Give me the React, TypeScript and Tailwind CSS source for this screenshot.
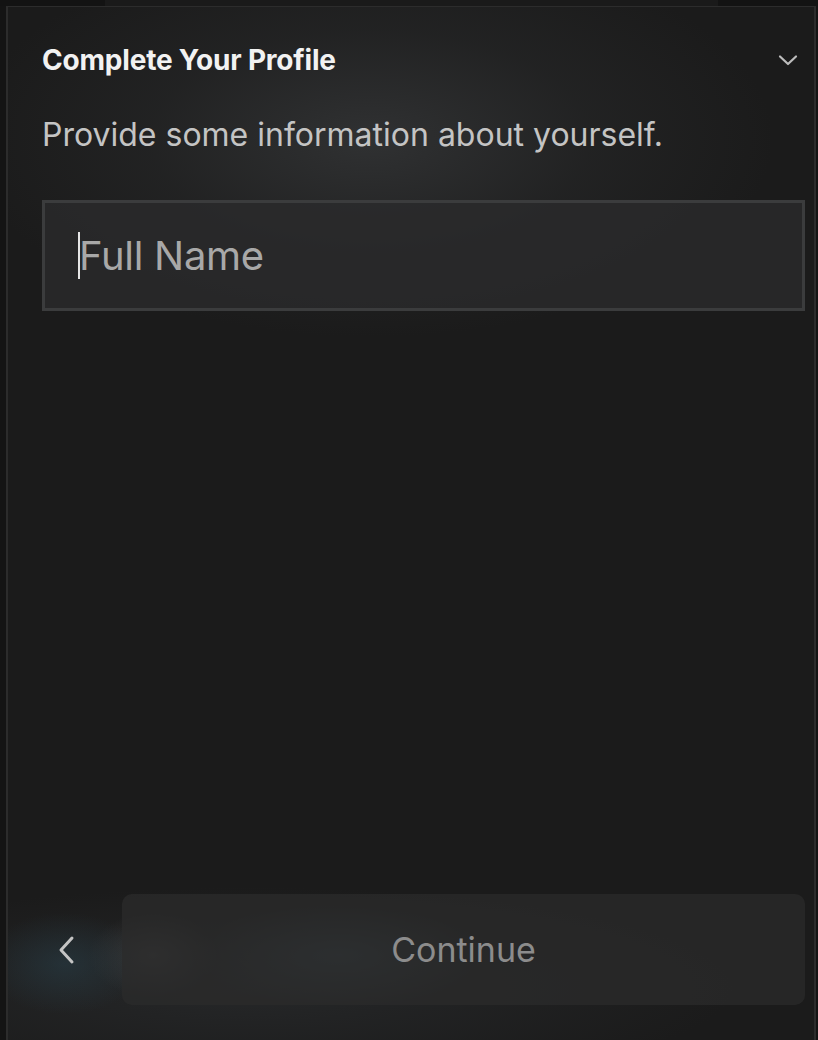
import React from "react";

export default function App() {
  return (
    <div
      className="w-[818px] h-[1040px] bg-[#141414] flex flex-col overflow-hidden"
      style={{ fontFamily: "Inter, 'Noto Sans', sans-serif" }}
    >
      <div className="h-[6px] flex shrink-0">
        <div className="w-[105px] bg-[#131313]" />
        <div className="flex-1 bg-[#1a1a1a]" />
        <div className="w-[100px] bg-[#131313]" />
      </div>
      <div className="flex-1 flex">
        <div className="w-[6px] bg-[#141414]" />
        <div className="relative w-[810px] flex flex-col border-l-2 border-r-2 border-t border-[#2c2c2c] bg-[#1b1b1b] overflow-hidden">
          {/* decorative glows */}
          <div className="pointer-events-none absolute left-0 top-0 w-full h-[330px] bg-[radial-gradient(ellipse_50%_60%_at_45%_40%,rgba(62,64,66,0.6),rgba(42,43,44,0.45)_55%,transparent_100%)]" />
          <div className="pointer-events-none absolute left-0 bottom-0 w-full h-[170px] bg-[radial-gradient(ellipse_10%_30%_at_7%_55%,rgba(40,62,72,0.55),transparent_100%),radial-gradient(ellipse_18%_30%_at_41%_50%,rgba(60,76,84,0.6),transparent_100%),radial-gradient(ellipse_8%_25%_at_18%_50%,rgba(80,80,80,0.5),transparent_100%),radial-gradient(ellipse_60%_60%_at_30%_70%,rgba(42,44,46,0.7),transparent_100%)]" />

          <div className="relative flex flex-col pl-[34px] pr-[9px] pt-[37px] flex-1">
            <div className="flex items-center justify-between h-[32px]">
              <h1 className="text-[28px] leading-[32px] font-bold text-[#f2f2f2] tracking-[-0.2px]">
                Complete Your Profile
              </h1>
              <svg
                width="22"
                height="14"
                viewBox="0 0 22 14"
                className="mr-[6px] mt-[-1px]"
                fill="none"
                stroke="#bdbdbd"
                strokeWidth="2.2"
                strokeLinecap="round"
                strokeLinejoin="round"
              >
                <path d="M3 3.5l8 7.5 8-7.5" />
              </svg>
            </div>
            <p className="mt-[41px] text-[32px] leading-[36px] text-[#c4c4c4]">
              Provide some information about yourself.
            </p>
            <div className="mt-[47px] h-[111px] border-[3px] border-[#3b3c3d] bg-[#2a2b2c]/80 flex items-center pl-[33px]">
              <div className="w-[2px] h-[47px] bg-[#e6e6e6] mr-[-1px]" />
              <span className="text-[40px] leading-[48px] text-[#a8a8a8] tracking-[-0.3px]">Full Name</span>
            </div>
            <div className="flex-1" />
            <div className="flex items-center mb-[35px] h-[111px]">
              <div className="w-[80px] flex items-center pl-[14px]">
                <svg
                  width="20"
                  height="30"
                  viewBox="0 0 20 30"
                  fill="none"
                  stroke="#c4c4c4"
                  strokeWidth="3"
                  strokeLinecap="round"
                  strokeLinejoin="round"
                >
                  <path d="M16 3L5 15l11 12" />
                </svg>
              </div>
              <button className="flex-1 h-[111px] rounded-[10px] bg-[#2b2b2b]/75 flex items-center justify-center">
                <span className="text-[34px] leading-[40px] text-[#8c8c8c]">Continue</span>
              </button>
            </div>
          </div>
        </div>
        <div className="flex-1 bg-[#141414]" />
      </div>
    </div>
  );
}
